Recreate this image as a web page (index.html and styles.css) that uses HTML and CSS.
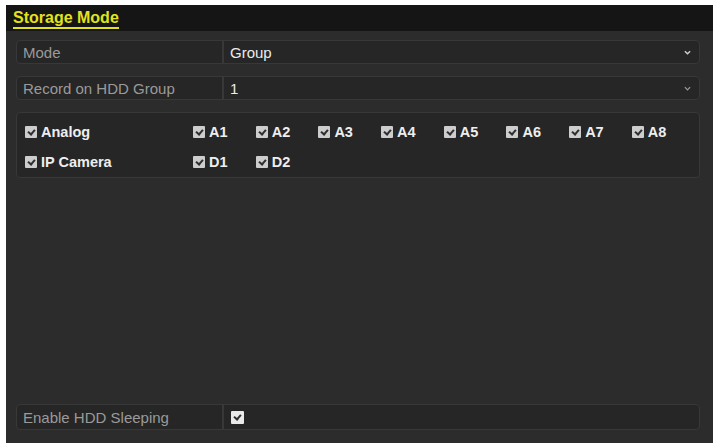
FILE: index.html
```html
<!DOCTYPE html>
<html>
<head>
<meta charset="utf-8">
<title>Storage Mode</title>
<link rel="stylesheet" href="styles.css"></head><body>
<div class="panel">
    <div class="header">
        <span class="title">Storage Mode</span>
    </div>

    <div class="content">
        <div class="field">
            <div class="label">Mode</div>
            <div class="value">
                <span>Group</span>
                <svg class="chevron" viewBox="0 0 8 5"><path d="M1 1 L4 4 L7 1" stroke="#cfcfcf" stroke-width="1.6" fill="none"/></svg>
            </div>
        </div>

        <div class="field">
            <div class="label">Record on HDD Group</div>
            <div class="value">
                <span>1</span>
                <svg class="chevron" viewBox="0 0 8 5"><path d="M1 1 L4 4 L7 1" stroke="#9a9a9a" stroke-width="1.4" fill="none"/></svg>
            </div>
        </div>

        <div class="channels">
            <div class="channel-row">
                <label class="check"><span class="box"></span>Analog</label>
                <label class="check"><span class="box"></span>A1</label>
                <label class="check"><span class="box"></span>A2</label>
                <label class="check"><span class="box"></span>A3</label>
                <label class="check"><span class="box"></span>A4</label>
                <label class="check"><span class="box"></span>A5</label>
                <label class="check"><span class="box"></span>A6</label>
                <label class="check"><span class="box"></span>A7</label>
                <label class="check"><span class="box"></span>A8</label>
            </div>
            <div class="channel-row">
                <label class="check"><span class="box"></span>IP Camera</label>
                <label class="check"><span class="box"></span>D1</label>
                <label class="check"><span class="box"></span>D2</label>
            </div>
        </div>

        <div class="field sleeping">
            <div class="label">Enable HDD Sleeping</div>
            <div class="value">
                <span class="box big"></span>
            </div>
        </div>
    </div>
</div>
</body></html>
```

FILE: styles.css
```css
body {
    margin: 0;
    background: #fff;
    font-family: "Liberation Sans", Arial, sans-serif;
}

.panel {
    width: 707px;
    height: 438px;
    margin: 5px 0 0 6px;
    background: #2c2c2c;
    display: flex;
    flex-direction: column;
}

.header {
    height: 26px;
    background: #151515;
    padding-left: 7px;
    display: flex;
    align-items: flex-end;
}

.title {
    color: #e4e21c;
    font-size: 16px;
    font-weight: bold;
    line-height: 17px;
    padding-bottom: 1px;
    margin-bottom: 2px;
    border-bottom: 2px solid #e4e21c;
}

.content {
    flex: 1;
    display: flex;
    flex-direction: column;
    padding: 9px 13px 13px 10px;
}

.field {
    display: flex;
    height: 22px;
    margin-bottom: 12px;
    background: #262626;
    border: 1px solid #383838;
    border-radius: 4px;
    font-size: 15px;
}

.label {
    width: 199px;
    padding-left: 6px;
    display: flex;
    align-items: center;
    color: #9a9a9a;
    border-right: 2px solid #383838;
}

.value {
    flex: 1;
    display: flex;
    align-items: center;
    justify-content: space-between;
    padding: 0 8px 0 6px;
    color: #ececec;
}

.chevron {
    width: 7px;
    height: 5px;
}

.channels {
    height: 66px;
    box-sizing: border-box;
    background: #262626;
    border: 1px solid #383838;
    border-radius: 4px;
    padding: 4px 0 0 8px;
}

.channel-row {
    display: grid;
    grid-template-columns: 168px repeat(8, 62.7px);
    height: 30px;
    align-items: center;
}

.check {
    display: flex;
    align-items: center;
    color: #eeeeee;
    font-size: 14.5px;
    font-weight: bold;
}

.box {
    width: 12px;
    height: 12px;
    margin-right: 4px;
    background: #cdcdcd;
    border-radius: 1px;
    position: relative;
    flex: none;
}

.box::after {
    content: "";
    position: absolute;
    left: 4px;
    top: 2px;
    width: 3px;
    height: 5px;
    border: solid #2e2e2e;
    border-width: 0 2px 2px 0;
    transform: rotate(40deg);
}

.sleeping {
    margin-top: auto;
    margin-bottom: 0;
    height: 24px;
}

.box.big {
    width: 13px;
    height: 13px;
    margin-left: 1px;
    background: #eaeaea;
}
```
